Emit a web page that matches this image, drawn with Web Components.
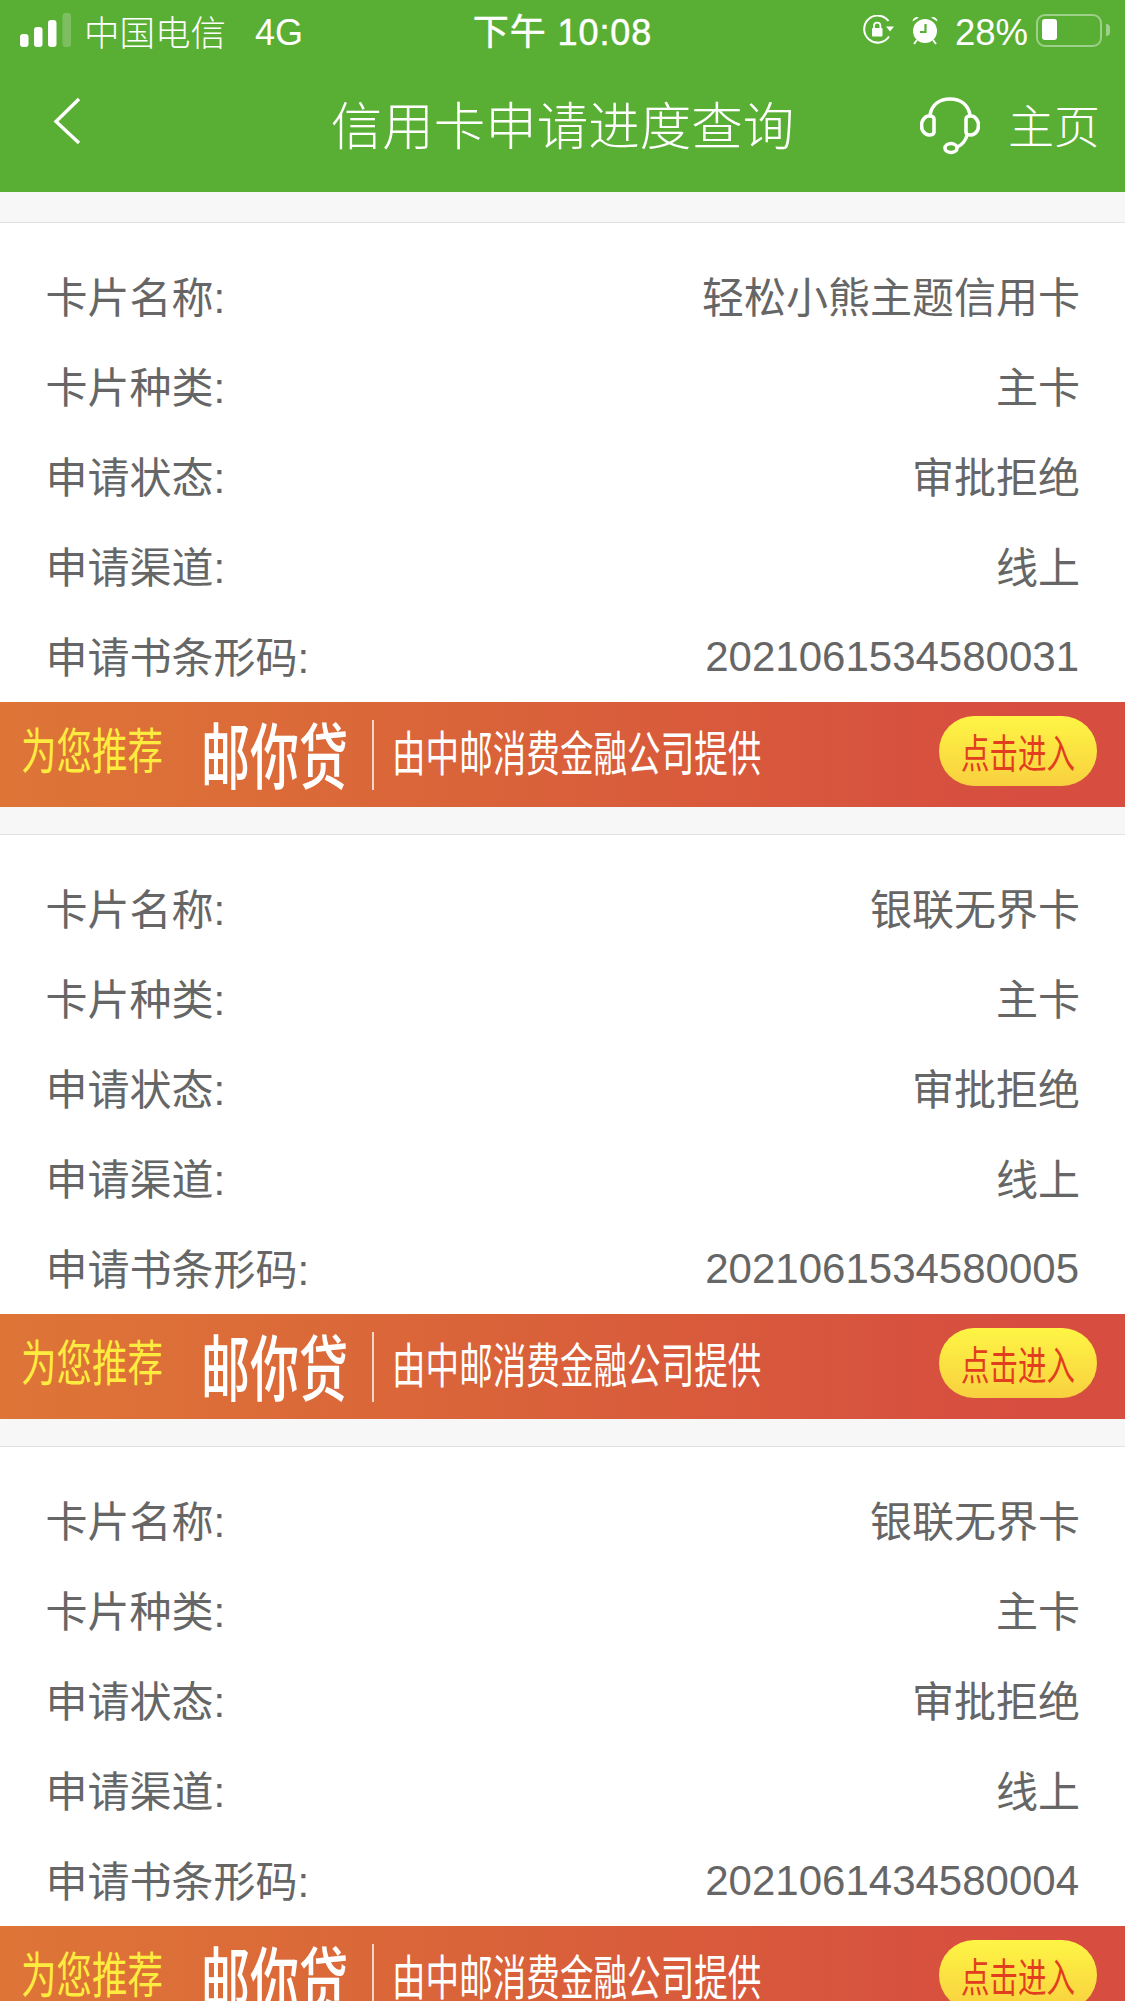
<!DOCTYPE html>
<html lang="zh">
<head>
<meta charset="utf-8">
<title>信用卡申请进度查询</title>
<style>
  html, body { margin: 0; height: 2001px; overflow: hidden; background: #f7f7f7; }
  body { font-family: "Liberation Sans", "Noto Sans CJK SC", sans-serif; }
  app-page { width: 1125px; }
</style>
</head>
<body>
<app-page>
  <status-bar></status-bar>
  <nav-bar title="信用卡申请进度查询" action="主页"></nav-bar>
  <apply-card name="轻松小熊主题信用卡" type="主卡" status="审批拒绝" channel="线上" code="2021061534580031"></apply-card>
  <apply-card name="银联无界卡" type="主卡" status="审批拒绝" channel="线上" code="2021061534580005"></apply-card>
  <apply-card name="银联无界卡" type="主卡" status="审批拒绝" channel="线上" code="2021061434580004"></apply-card>
</app-page>

<script>
class AppPage extends HTMLElement {
  constructor() {
    super();
    this.attachShadow({ mode: 'open' });
    this.shadowRoot.innerHTML = `
      <style>
        :host { display: flex; flex-direction: column; }
      </style>
      <slot></slot>
    `;
  }
}

class StatusBar extends HTMLElement {
  constructor() {
    super();
    this.attachShadow({ mode: 'open' });
    this.shadowRoot.innerHTML = `
      <style>
        :host {
          display: grid;
          grid-template-columns: 1fr auto 1fr;
          align-items: center;
          height: 60px;
          padding: 0 23px 0 20px;
          background: #59ae34;
          color: #fff;
          font-size: 35.5px;
          font-weight: 300;
        }
        .left, .right { display: flex; align-items: center; }
        .right { justify-content: flex-end; }
        .bars { display: block; margin-right: 13px; }
        .net { margin-left: 29px; font-size: 36px; position: relative; top: 3px; }
        .time { font-size: 36px; font-weight: 400; letter-spacing: .9px; margin-left: 3px; position: relative; top: -1px; -webkit-text-stroke: .5px #fff; }
        .pct { font-size: 36.5px; margin: 0 8px 0 16px; position: relative; top: 3px; }
        .rot { margin-right: 17px; }
        .battery {
          position: relative;
          box-sizing: border-box;
          width: 66px; height: 33px;
          border: 2.5px solid rgba(255,255,255,.42);
          border-radius: 9px;
        }
        .battery::before {
          content: '';
          position: absolute; left: 3.5px; top: 3.5px;
          width: 15px; height: 21px;
          background: #fff; border-radius: 3px;
        }
        .battery::after {
          content: '';
          position: absolute; right: -10px; top: 8px;
          width: 4px; height: 12px;
          background: rgba(255,255,255,.42);
          border-radius: 0 4px 4px 0;
        }
      </style>
      <div class="left">
        <svg class="bars" width="51" height="34" viewBox="0 0 51 34">
          <rect x="0" y="21" width="8.5" height="13" rx="3" fill="#fff"/>
          <rect x="14" y="14" width="8.5" height="20" rx="3" fill="#fff"/>
          <rect x="28" y="7" width="8.5" height="27" rx="3" fill="#fff"/>
          <rect x="42.5" y="0" width="8.5" height="34" rx="3" fill="#fff" fill-opacity=".22"/>
        </svg>
        <span>中国电信</span>
        <span class="net">4G</span>
      </div>
      <div class="time">下午 10:08</div>
      <div class="right">
        <svg class="rot" width="32" height="30" viewBox="0 0 32 30" fill="none">
          <path d="M27 21.5A13.5 13.5 0 1 1 26.5 6" stroke="#fff" stroke-width="2"/>
          <path d="M24 11.5h8l-4 5z" fill="#fff"/>
          <rect x="10" y="13" width="10.5" height="8.5" rx="1" fill="#fff"/>
          <path d="M12 13v-2.2a3.2 3.2 0 0 1 6.4 0V13" stroke="#fff" stroke-width="1.7"/>
        </svg>
        <svg width="28" height="30" viewBox="0 0 28 30" fill="none">
          <circle cx="14" cy="16" r="12" fill="#fff"/>
          <path d="M1.5 6.5A4.5 4.5 0 0 1 8 2.5zM26.5 6.5A4.5 4.5 0 0 0 20 2.5z" fill="#fff"/>
          <path d="M6 25l-3 4M22 25l3 4" stroke="#fff" stroke-width="2"/>
          <path d="M14.5 9v8H9" stroke="#59ae34" stroke-width="2.2"/>
        </svg>
        <span class="pct">28%</span>
        <div class="battery"></div>
      </div>
    `;
  }
}

class NavBar extends HTMLElement {
  static get observedAttributes() {
    return ['title', 'action'];
  }

  constructor() {
    super();
    this.attachShadow({ mode: 'open' });
  }

  connectedCallback() {
    this.render();
  }

  attributeChangedCallback() {
    this.render();
  }

  render() {
    this.shadowRoot.innerHTML = `
      <style>
        :host {
          display: grid;
          grid-template-columns: 1fr auto 1fr;
          align-items: center;
          height: 132px;
          padding: 0 25px 12px 53px;
          box-sizing: border-box;
          background: #59ae34;
          color: #fff;
          font-weight: 300;
        }
        .back { display: block; position: relative; top: 1px; }
        h1 { margin: 0; font-size: 51.5px; font-weight: 300; line-height: 1; position: relative; top: 8px; left: -14px; }
        .action { display: flex; justify-content: flex-end; align-items: center; gap: 28px; font-size: 46px; }
        .action span { position: relative; top: 3px; }
        .action svg { position: relative; top: 6px; }
      </style>
      <svg class="back" width="28" height="50" viewBox="0 0 28 50" fill="none">
        <path d="M26 3L3 25.5 26 47" stroke="#fff" stroke-width="3.4"/>
      </svg>
      <h1>${this.getAttribute('title') || ''}</h1>
      <div class="action">
        <svg width="60" height="58" viewBox="0 0 60 58" fill="none" stroke="#fff" stroke-width="3.6">
          <path d="M10 18C12 7 20 2 30 2s18 5 20 16"/>
          <path d="M9 19a7.5 9.5 0 0 0 0 19c3 0 5-1 5-3V22c0-2-2-3-5-3z"/>
          <path d="M51 19a7.5 9.5 0 0 1 0 19c-3 0-5-1-5-3V22c0-2 2-3 5-3z"/>
          <path d="M47 38c-1 5-5 10-10 12"/>
          <ellipse cx="31" cy="51" rx="6" ry="4.5"/>
        </svg>
        <span>${this.getAttribute('action') || ''}</span>
      </div>
    `;
  }
}

class InfoRow extends HTMLElement {
  constructor() {
    super();
    this.attachShadow({ mode: 'open' });
    this.shadowRoot.innerHTML = `
      <style>
        :host {
          display: flex;
          justify-content: space-between;
          align-items: center;
          box-sizing: border-box;
          height: 90px;
          padding-bottom: 6px;
          font-size: 42px;
          color: #666;
        }
      </style>
      <slot name="label"></slot>
      <slot></slot>
    `;
  }
}

class PromoBanner extends HTMLElement {
  constructor() {
    super();
    this.attachShadow({ mode: 'open' });
    this.shadowRoot.innerHTML = `
      <style>
        :host {
          display: flex;
          align-items: center;
          box-sizing: border-box;
          height: 105px;
          padding: 0 28px 7px 21px;
          background: linear-gradient(90deg, #de7537 0%, #d9603a 50%, #d74d40 92%);
          white-space: nowrap;
          overflow: hidden;
        }
        span { display: block; line-height: 1; }
        .tag { color: #fdec3f; font-size: 35.5px; transform: translateY(3px) scaleY(1.38); }
        .brand { color: #fff; font-size: 49px; font-weight: 500; margin-left: 38px; transform: translateY(7px) scaleY(1.46); }
        .rule { width: 2px; height: 70px; margin: 7px 20px 0 24px; background: #f3d8c8; }
        .desc { color: #fff; font-size: 33.6px; transform: translateY(4px) scaleY(1.42); margin-left: -2px; }
        .enter {
          display: flex;
          align-items: center;
          justify-content: center;
          margin-left: auto;
          width: 158px;
          height: 70px;
          border-radius: 35px;
          background: linear-gradient(180deg, #fef545 0%, #f8d03f 100%);
          color: #e23d1f;
          font-size: 28.5px;
        }
        .enter span { transform: translateY(3px) scaleY(1.4); }
      </style>
      <span class="tag">为您推荐</span>
      <span class="brand">邮你贷</span>
      <div class="rule"></div>
      <span class="desc">由中邮消费金融公司提供</span>
      <div class="enter"><span>点击进入</span></div>
    `;
  }
}

class ApplyCard extends HTMLElement {
  constructor() {
    super();
    this.attachShadow({ mode: 'open' });
  }

  connectedCallback() {
    const fields = [
      ['卡片名称:', 'name'],
      ['卡片种类:', 'type'],
      ['申请状态:', 'status'],
      ['申请渠道:', 'channel'],
      ['申请书条形码:', 'code']
    ];

    this.shadowRoot.innerHTML = `
      <style>
        :host {
          display: block;
          margin-top: 27px;
          border-top: 1px solid #e2e2e2;
        }
        :host(:first-of-type) { margin-top: 30px; }
        .rows { padding: 29px 45px 0 45.5px; background: #fff; }
        .code { position: relative; top: 3px; right: 1px; }
      </style>
      <div class="rows">
        ${fields
          .map(
            ([label, attr]) => `
            <info-row>
              <span slot="label">${label}</span>
              <span class="${attr}">${this.getAttribute(attr)}</span>
            </info-row>
          `
          )
          .join('')}
      </div>
      <promo-banner></promo-banner>
    `;
  }
}

customElements.define('app-page', AppPage);
customElements.define('status-bar', StatusBar);
customElements.define('nav-bar', NavBar);
customElements.define('info-row', InfoRow);
customElements.define('promo-banner', PromoBanner);
customElements.define('apply-card', ApplyCard);
</script>
</body>
</html>
